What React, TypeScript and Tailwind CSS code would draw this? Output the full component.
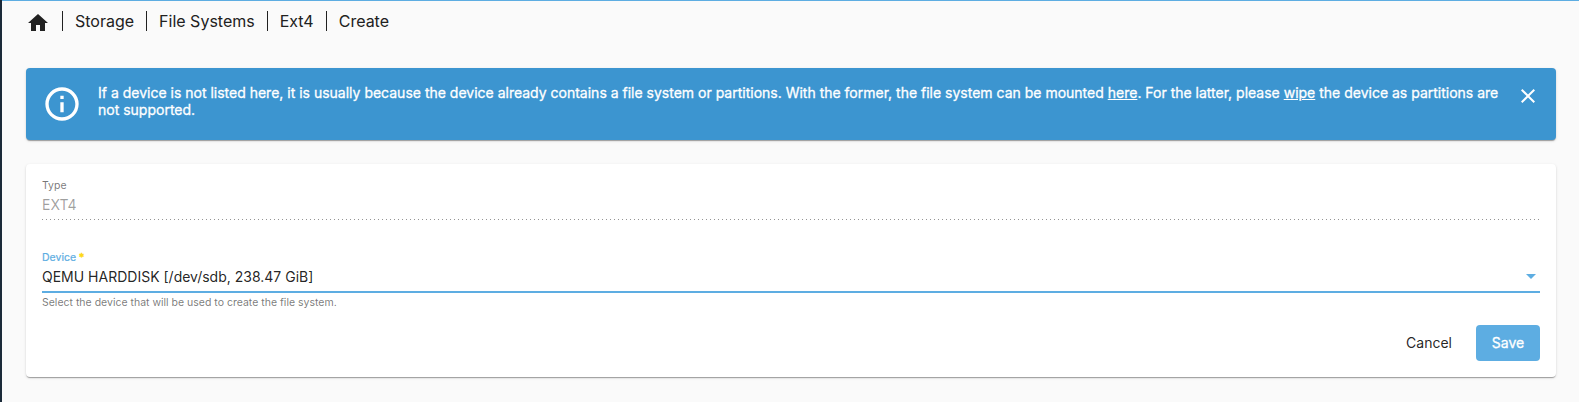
import { Fragment } from 'react';

const crumbs = ['Storage', 'File Systems', 'Ext4', 'Create'];

function Breadcrumb() {
  return (
    <nav className="flex h-[42px] items-start pl-6 pt-2.5 text-base leading-5 text-[#212121]">
      <svg viewBox="0 0 24 24" className="size-6 fill-[#212121]">
        <path d="M10,20V14H14V20H19V12H22L12,3L2,12H5V20H10Z" />
      </svg>
      {crumbs.map((c) => (
        <Fragment key={c}>
          <span className="ml-3 mr-3 h-5 w-px bg-[#212121]" />
          <span>{c}</span>
        </Fragment>
      ))}
    </nav>
  );
}

function InfoBanner() {
  return (
    <section className="flex h-[72px] items-start rounded bg-[#3c95d0] px-4 pt-4 text-white shadow-[0_2px_1px_-1px_rgba(0,0,0,0.2),0_1px_1px_0_rgba(0,0,0,0.14),0_1px_3px_0_rgba(0,0,0,0.12)]">
      <svg viewBox="0 0 24 24" className="size-10 shrink-0 fill-white">
        <path d="M11,9H13V7H11M12,20C7.59,20 4,16.41 4,12C4,7.59 7.59,4 12,4C16.41,4 20,7.59 20,12C20,16.41 16.41,20 12,20M12,2A10,10 0 0,0 2,12A10,10 0 0,0 12,22A10,10 0 0,0 22,12A10,10 0 0,0 12,2M11,17H13V11H11V17Z" />
      </svg>
      <p className="mx-4 flex-1 text-sm font-normal leading-[17px] [-webkit-text-stroke:0.3px_white]">
        If a device is not listed here, it is usually because the device already contains a file system or partitions.
        With the former, the file system can be mounted <a className="underline">here</a>. For the latter, please{' '}
        <a className="underline">wipe</a> the device as partitions are
        <br />
        not supported.
      </p>
      <svg viewBox="0 0 24 24" className="size-6 shrink-0 fill-white">
        <path d="M19,6.41L17.59,5L12,10.59L6.41,5L5,6.41L10.59,12L5,17.59L6.41,19L12,13.41L17.59,19L19,17.59L13.41,12L19,6.41Z" />
      </svg>
    </section>
  );
}

export default function App() {
  return (
    <div className="h-[402px] border-l-2 border-[#1b2a39] bg-[#fafafa] font-['Inter',sans-serif]">
      <div className="h-px bg-[#5dade2]" />
      <Breadcrumb />
      <main className="flex flex-col gap-6 pl-6 pr-[23px] pt-[25px]">
        <InfoBanner />
        <section className="flex h-[213px] flex-col rounded bg-white px-4 shadow-[0_2px_1px_-1px_rgba(0,0,0,0.2),0_1px_1px_0_rgba(0,0,0,0.14),0_1px_3px_0_rgba(0,0,0,0.12)]">
          <div className="h-[72px] pt-[15px]">
            <div className="text-[10.5px] leading-[14px] text-black/54">Type</div>
            <div className="mt-[3px] h-[22px] text-sm leading-[18px] text-black/38">EXT4</div>
            <div className="mt-px h-px bg-[linear-gradient(to_right,rgba(0,0,0,0.42)_0,rgba(0,0,0,0.42)_33%,transparent_0)] bg-size-[4px_100%] bg-repeat-x" />
          </div>
          <div className="pt-[15px]">
            <div className="text-[10.5px] leading-[14px] text-[#5dade2] [-webkit-text-stroke:0.2px]">
              Device <span className="text-[#fdd813] [-webkit-text-stroke:0.5px]">*</span>
            </div>
            <div className="mt-[3px] flex h-[23px] justify-between text-sm leading-[18px] text-black/87">
              <span>QEMU HARDDISK [/dev/sdb, 238.47 GiB]</span>
              <svg viewBox="0 0 10 5" className="mr-1 mt-[6px] h-[5px] w-[10px] fill-[#5dade2]">
                <path d="M0 0H10L5 5Z" />
              </svg>
            </div>
            <div className="h-0.5 bg-[#5dade2]" />
            <div className="mt-[2px] text-[10.5px] leading-4 text-black/54">
              Select the device that will be used to create the file system.
            </div>
          </div>
          <div className="mb-4 mt-auto flex justify-end gap-2 text-sm font-normal leading-9">
            <button className="h-9 px-4 text-black/87">Cancel</button>
            <button className="h-9 w-16 rounded bg-[#5dade2] text-white [-webkit-text-stroke:0.3px_white]">Save</button>
          </div>
        </section>
      </main>
    </div>
  );
}
